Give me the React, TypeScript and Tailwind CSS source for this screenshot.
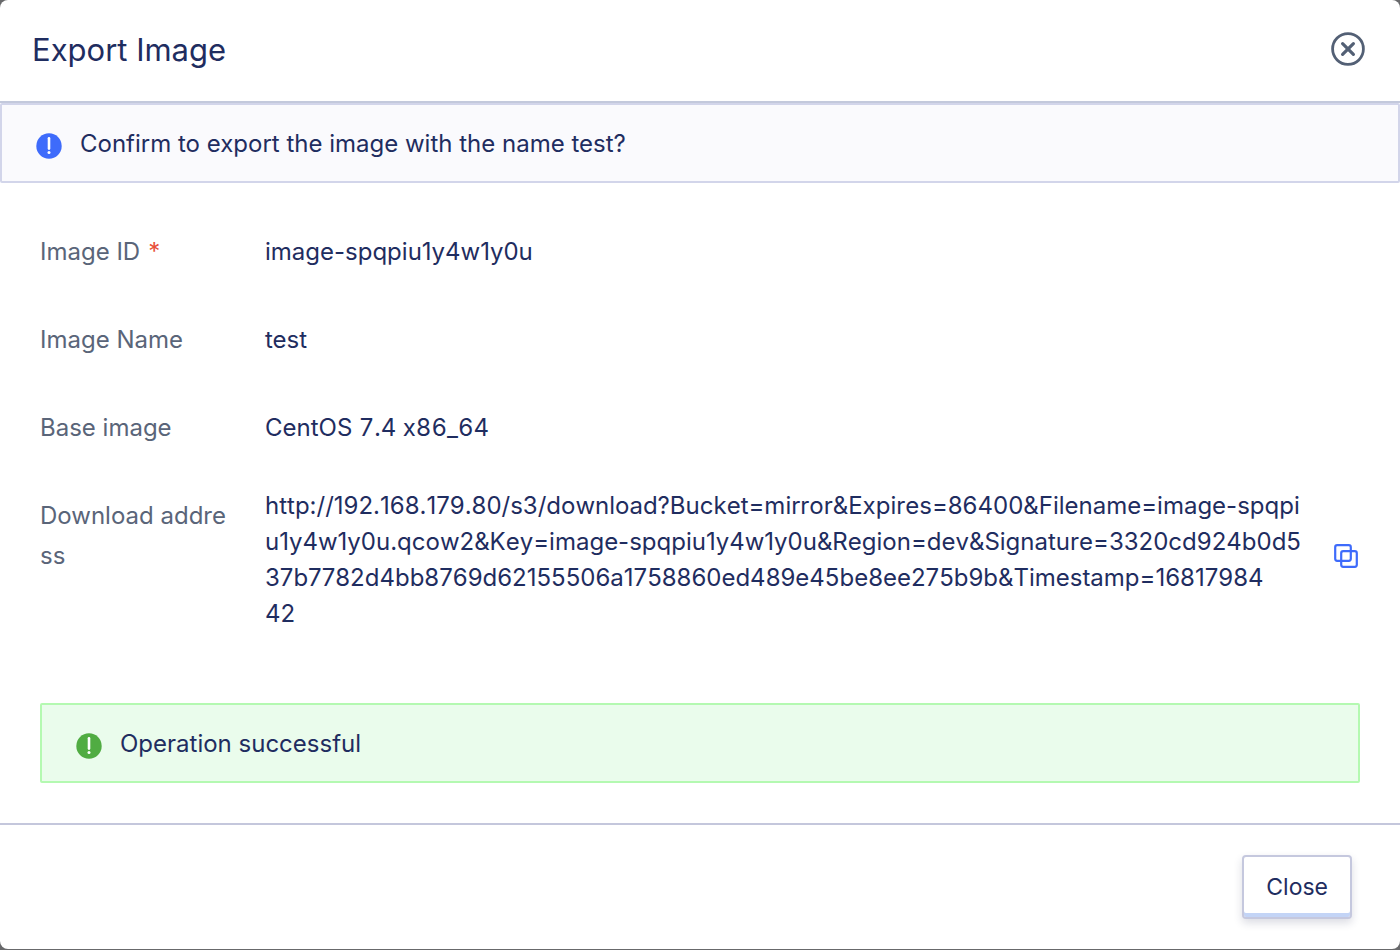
import type { ReactNode } from "react";

const downloadUrlLines = [
  "http://192.168.179.80/s3/download?Bucket=mirror&Expires=86400&Filename=image-spqpi",
  "u1y4w1y0u.qcow2&Key=image-spqpiu1y4w1y0u&Region=dev&Signature=3320cd924b0d5",
  "37b7782d4bb8769d62155506a1758860ed489e45be8ee275b9b&Timestamp=16817984",
  "42",
];

function NoticeIcon({ className }: { className: string }) {
  return (
    <svg viewBox="0 0 26 26" className={`size-[26px] shrink-0 ${className}`} aria-hidden="true">
      <circle cx="13" cy="13" r="12.7" fill="currentColor" />
      <path d="M13 5.2v10.4" stroke="white" strokeWidth="2.6" strokeLinecap="round" />
      <circle cx="13" cy="19.6" r="1.5" fill="white" />
    </svg>
  );
}

function CloseIcon() {
  return (
    <svg viewBox="0 0 34 34" className="size-[34px]" fill="none" stroke="currentColor" aria-hidden="true">
      <circle cx="17" cy="17" r="15.4" strokeWidth="2.8" />
      <path d="M11.6 11.6l10.8 10.8M22.4 11.6L11.6 22.4" strokeWidth="3.2" strokeLinecap="round" />
    </svg>
  );
}

function CopyIcon() {
  return (
    <svg viewBox="0 0 24 24" className="size-6" fill="none" stroke="currentColor" strokeWidth="2.2" aria-hidden="true">
      <rect x="1.2" y="1.2" width="15.6" height="15.6" rx="2" />
      <rect x="7.2" y="7.2" width="15.6" height="15.6" rx="2" />
    </svg>
  );
}

function Field({ label, required, children }: { label: string; required?: boolean; children: ReactNode }) {
  return (
    <div className="flex items-start gap-[35px]">
      <dt className="w-[190px] shrink-0 leading-10 break-all text-[#5a6579]">
        {label}
        {required && <span className="ml-2 text-[#e8503a]">*</span>}
      </dt>
      <dd className="min-w-0 flex-1 leading-10">{children}</dd>
    </div>
  );
}

export default function App() {
  return (
    <div className="bg-[#68696b] pb-px font-['Inter','Liberation_Sans',sans-serif] text-2xl text-[#1f2d60] [font-variant-ligatures:no-contextual]">
      <div role="dialog" aria-labelledby="dialog-title" className="rounded-lg bg-white">
        <header className="flex items-center justify-between border-b-2 border-[#c3c9dc] pt-[30px] pr-[35px] pb-[31px] pl-8">
          <h1 id="dialog-title" className="text-[31px] leading-10">
            Export Image
          </h1>
          <button type="button" aria-label="Close dialog" className="-mt-0.5 text-[#536075]">
            <CloseIcon />
          </button>
        </header>

        <div className="flex items-start gap-[18px] rounded-xs border-2 border-[#d2d5ea] bg-[#fafafd] px-[34px] pt-[21px] pb-[19px] leading-9">
          <NoticeIcon className="mt-[7px] text-[#3e6bfb]" />
          <p>Confirm to export the image with the name test?</p>
        </div>

        <div className="px-10 pt-[49px] pb-10">
          <dl className="flex flex-col gap-12">
            <Field label="Image ID" required>
              <p className="[font-kerning:none]">image-spqpiu1y4w1y0u</p>
            </Field>
            <Field label="Image Name">test</Field>
            <Field label="Base image">
              <p className="tabular-nums">CentOS 7.4 x86_64</p>
            </Field>
            <Field label="Download address">
              <div className="-mt-2 flex items-center">
                <p className="min-w-0 flex-1 leading-9 break-all whitespace-pre-line [font-kerning:none]">
                  {downloadUrlLines.join("\n")}
                </p>
                <button type="button" aria-label="Copy download address" className="-mt-2 ml-4 pr-0.5 text-[#3e6bfb]">
                  <CopyIcon />
                </button>
              </div>
            </Field>
          </dl>

          <div
            role="status"
            className="mt-[71px] flex items-start gap-[18px] rounded-xs border-2 border-[#b4f9b1] bg-[#eafcec] px-[34px] pt-[21px] pb-[19px] leading-9"
          >
            <NoticeIcon className="mt-[7px] text-[#50ac42]" />
            <p>Operation successful</p>
          </div>
        </div>

        <footer className="flex justify-end border-t-2 border-[#c4c7dc] px-12 py-[30px]">
          <button
            type="button"
            className="h-16 rounded-sm border-2 border-[#c5c8de] bg-white px-[22px] text-[23px] leading-9 shadow-[inset_0_-4px_0_#c3d4f6,0_4px_8px_rgba(30,40,80,0.16)]"
          >
            Close
          </button>
        </footer>
      </div>
    </div>
  );
}
